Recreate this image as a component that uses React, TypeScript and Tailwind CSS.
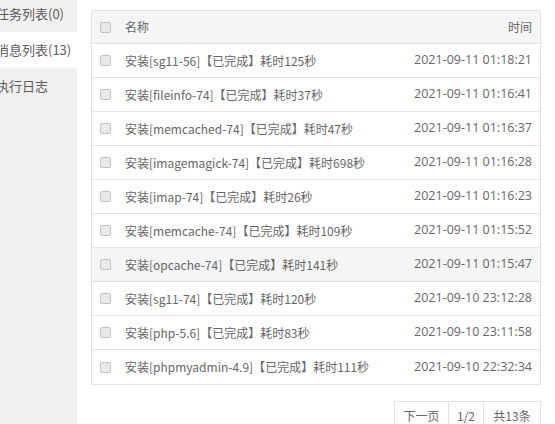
const menu = [
  { label: '任务列表(0)', active: false },
  { label: '消息列表(13)', active: true },
  { label: '执行日志', active: false },
]

const rows = [
  { name: '安装[sg11-56]【已完成】耗时125秒', time: '2021-09-11 01:18:21' },
  { name: '安装[fileinfo-74]【已完成】耗时37秒', time: '2021-09-11 01:16:41' },
  { name: '安装[memcached-74]【已完成】耗时47秒', time: '2021-09-11 01:16:37' },
  { name: '安装[imagemagick-74]【已完成】耗时698秒', time: '2021-09-11 01:16:28' },
  { name: '安装[imap-74]【已完成】耗时26秒', time: '2021-09-11 01:16:23' },
  { name: '安装[memcache-74]【已完成】耗时109秒', time: '2021-09-11 01:15:52' },
  { name: '安装[opcache-74]【已完成】耗时141秒', time: '2021-09-11 01:15:47', hover: true },
  { name: '安装[sg11-74]【已完成】耗时120秒', time: '2021-09-10 23:12:28' },
  { name: '安装[php-5.6]【已完成】耗时83秒', time: '2021-09-10 23:11:58' },
  { name: '安装[phpmyadmin-4.9]【已完成】耗时111秒', time: '2021-09-10 22:32:34' },
]

const cjk = { fontFamily: '"Noto Sans CJK SC", sans-serif' }

function Check() {
  return (
    <span className="block w-[11px] h-[11px] rounded-[2px] border border-[#c2c2c2] bg-[#e9e9e9]" />
  )
}

export default function App() {
  return (
    <div
      className="flex w-[555px] h-[424px] overflow-hidden bg-white text-[#666]"
      style={{ fontFamily: '"Open Sans", "Noto Sans CJK SC", sans-serif' }}
    >
      {/* Side menu */}
      <div className="w-[77px] shrink-0 bg-[#f0f0f0] overflow-hidden">
        <div className="-mt-[4px]">
          {menu.map((m) => (
            <div
              key={m.label}
              style={cjk}
              className={`h-[36px] flex items-center -ml-[4px] whitespace-nowrap text-[13px] text-[#5c5c5c] ${
                m.active ? 'bg-white' : ''
              }`}
            >
              {m.label}
            </div>
          ))}
        </div>
      </div>

      {/* Content */}
      <div className="flex-1 pl-[14px] pr-[14px] pt-[10px]">
        <div className="border border-[#e2e2e2] text-[12px]">
          <div className="h-[33px] flex items-center bg-[#f5f5f5] border-b border-[#e2e2e2]">
            <div className="w-[33px] pl-[8px]">
              <Check />
            </div>
            <div className="flex-1" style={cjk}>名称</div>
            <div className="pr-[8px]" style={cjk}>时间</div>
          </div>
          {rows.map((r, i) => (
            <div
              key={r.time}
              className={`h-[34px] flex items-center ${i < rows.length - 1 ? 'border-b border-[#e2e2e2]' : ''} ${
                r.hover ? 'bg-[#f5f5f5]' : ''
              }`}
            >
              <div className="w-[33px] pl-[8px]">
                <Check />
              </div>
              <div className="flex-1 whitespace-nowrap" style={cjk}>{r.name}</div>
              <div className="pr-[8px] whitespace-nowrap text-[12.5px]">{r.time}</div>
            </div>
          ))}
        </div>

        {/* Pager */}
        <div className="flex justify-end mt-[16px]">
          <div className="flex border border-[#e2e2e2] text-[12px] h-[30px]" style={cjk}>
            <div className="w-[54px] flex items-center justify-center border-r border-[#e2e2e2]">下一页</div>
            <div className="w-[35px] flex items-center justify-center border-r border-[#e2e2e2]">1/2</div>
            <div className="w-[56px] flex items-center justify-center">共13条</div>
          </div>
        </div>
      </div>
    </div>
  )
}
